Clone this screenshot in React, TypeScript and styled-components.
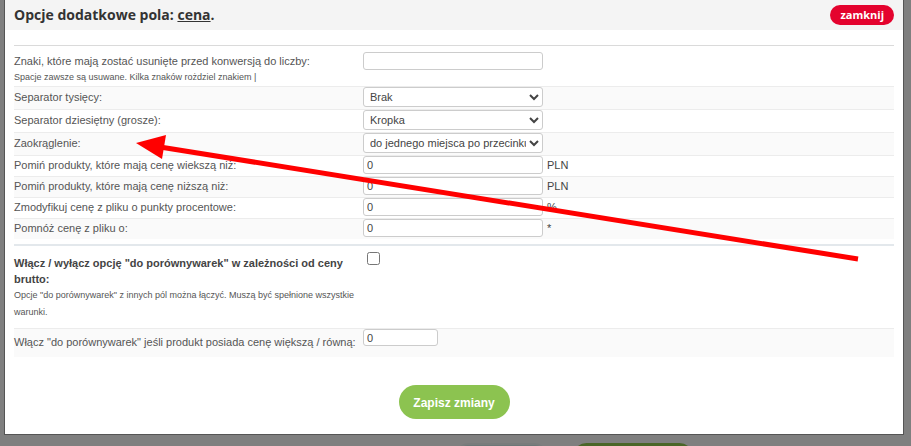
import React from "react";
import styled, { createGlobalStyle } from "styled-components";

const Global = createGlobalStyle`
  html, body { margin: 0; padding: 0; overflow: hidden; background: #fff; }
  * { box-sizing: border-box; }
`;

const Page = styled.div`
  height: 446px;
  overflow: hidden;
  padding-top: 443px;
`;

const PageFooter = styled.div`
  display: flex;
  gap: 25px;
  padding-left: 455px;
`;

const PagePill = styled.div<{ $w: number; $bg: string; $bd: string }>`
  width: ${(p) => p.$w}px;
  height: 27px;
  border-radius: 14px;
  background: ${(p) => p.$bg};
  border: 2px solid ${(p) => p.$bd};
`;

const Backdrop = styled.div`
  position: fixed;
  inset: 0;
  background: rgba(0, 0, 0, 0.5);
`;

const Dialog = styled.div`
  position: fixed;
  left: 4px;
  top: 0;
  width: 900px;
  background: #fff;
  border: 1px solid #555;
  border-top: none;
  padding-bottom: 15px;
`;

const Header = styled.div`
  height: 30px;
  background: #f4f4f4;
  display: flex;
  align-items: center;
  justify-content: space-between;
  padding: 0 9px;
`;

const Title = styled.h1`
  margin: 0;
  font: 700 14px/20px "Open Sans", sans-serif;
  color: #333;
  u { text-decoration: underline; }
`;

const CloseButton = styled.button`
  height: 20px;
  padding: 0 10px;
  border: none;
  border-radius: 10px;
  background: #e4032e;
  color: #fff;
  font: 700 11px/20px "Open Sans", sans-serif;
`;

const Body = styled.div`
  padding: 0 9px;
`;

const Rule = styled.div`
  margin-top: 15px;
  height: 1px;
  background: #dadada;
`;

const Row = styled.div<{ $shade?: boolean; $first?: boolean; $pt?: number; $pb?: number }>`
  display: grid;
  grid-template-columns: 349px 1fr;
  align-items: start;
  background: ${(p) => (p.$shade ? "#fafafa" : "#fff")};
  border-top: ${(p) => (p.$first ? "none" : "1px solid #ececec")};
  padding: ${(p) => p.$pt ?? 0}px 0 ${(p) => p.$pb ?? 2}px;
`;

const Label = styled.div<{ $lh: number; $pt?: number }>`
  font: 400 11px/${(p) => p.$lh}px "Liberation Sans", Arial, sans-serif;
  color: #555;
  padding-top: ${(p) => p.$pt ?? 0}px;
`;

const Hint = styled.div<{ $lh: number }>`
  font: 400 9px/${(p) => p.$lh}px "Liberation Sans", Arial, sans-serif;
  color: #555;
`;

const Strong = styled.div<{ $pt?: number }>`
  font: 700 11px/16px "Liberation Sans", Arial, sans-serif;
  color: #444;
  padding-top: ${(p) => p.$pt ?? 0}px;
`;

const Control = styled.div`
  display: flex;
  align-items: center;
  gap: 4px;
  font: 400 11px/18px "Liberation Sans", Arial, sans-serif;
  color: #444;
`;

const TextInput = styled.input<{ $w?: number; $h?: number }>`
  width: ${(p) => p.$w ?? 180}px;
  height: ${(p) => p.$h ?? 18}px;
  margin: 0;
  padding: 0 3px;
  border: 1px solid #ccc;
  border-radius: 3px;
  background: #fff;
  font: 400 11px "Liberation Sans", Arial, sans-serif;
  color: #444;
  outline: none;
`;

const Select = styled.select`
  width: 180px;
  height: 20px;
  margin: 0;
  padding: 0 0 0 2px;
  border: 1px solid #ccc;
  border-radius: 3px;
  background: #fff;
  font: 400 11px "Liberation Sans", Arial, sans-serif;
  color: #444;
`;

const Check = styled.input`
  width: 13px;
  height: 13px;
  margin: 0 0 0 4px;
`;

const SectionRule = styled.div`
  margin-top: 5px;
  height: 2px;
  background: #e3e8ec;
`;

const Footer = styled.div`
  display: flex;
  justify-content: center;
  margin-top: 28px;
`;

const SaveButton = styled.button`
  width: 111px;
  height: 34px;
  border: none;
  border-radius: 17px;
  background: #8cc350;
  color: #fff;
  font: 700 12px/34px "Liberation Sans", Arial, sans-serif;
`;

const Annotation = styled.svg`
  position: fixed;
  left: 0;
  top: 0;
  pointer-events: none;
`;

type Field =
  | { kind: "select"; label: string; value: string }
  | { kind: "input"; label: string; unit: string };

const fields: Field[] = [
  { kind: "select", label: "Separator tysięcy:", value: "Brak" },
  { kind: "select", label: "Separator dziesiętny (grosze):", value: "Kropka" },
  { kind: "select", label: "Zaokrąglenie:", value: "do jednego miejsca po przecinku" },
  { kind: "input", label: "Pomiń produkty, które mają cenę wiekszą niż:", unit: "PLN" },
  { kind: "input", label: "Pomiń produkty, które mają cenę niższą niż:", unit: "PLN" },
  { kind: "input", label: "Zmodyfikuj cenę z pliku o punkty procentowe:", unit: "%" },
  { kind: "input", label: "Pomnóż cenę z pliku o:", unit: "*" },
];

export default function App() {
  return (
    <>
      <Global />
      <Page>
        <PageFooter>
          <PagePill $w={93} $bg="#dbeeee" $bd="#f2f8f8" />
          <PagePill $w={120} $bg="#94cc50" $bd="#94cc50" />
        </PageFooter>
      </Page>
      <Backdrop />
      <Dialog>
        <Header>
          <Title>
            Opcje dodatkowe pola: <u>cena</u>.
          </Title>
          <CloseButton>zamknij</CloseButton>
        </Header>
        <Body>
          <Rule />
          <Row $first $pt={6}>
            <div>
              <Label $lh={18}>Znaki, które mają zostać usunięte przed konwersją do liczby:</Label>
              <Hint $lh={14}>Spacje zawsze są usuwane. Kilka znaków rożdziel znakiem |</Hint>
            </div>
            <Control>
              <TextInput defaultValue="" />
            </Control>
          </Row>
          {fields.map((f, i) => (
            <Row key={f.label} $shade={i % 2 === 0}>
              <Label $lh={f.kind === "select" ? 20 : 18}>{f.label}</Label>
              <Control>
                {f.kind === "select" ? (
                  <Select defaultValue={f.value}>
                    <option>{f.value}</option>
                  </Select>
                ) : (
                  <>
                    <TextInput defaultValue="0" />
                    <span>{f.unit}</span>
                  </>
                )}
              </Control>
            </Row>
          ))}
          <SectionRule />
          <Row $first $pt={6} $pb={7}>
            <div>
              <Strong $pt={3}>
                Włącz / wyłącz opcję "do porównywarek" w zależności od ceny brutto:
              </Strong>
              <Hint $lh={17}>
                Opcje "do porównywarek" z innych pól można łączyć. Muszą być spełnione wszystkie warunki.
              </Hint>
            </div>
            <Control>
              <Check type="checkbox" />
            </Control>
          </Row>
          <Row $shade $pb={7}>
            <Label $lh={16} $pt={5}>
              Włącz "do porównywarek" jeśli produkt posiada cenę większą / równą:
            </Label>
            <Control>
              <TextInput defaultValue="0" $w={75} $h={17} />
            </Control>
          </Row>
          <Footer>
            <SaveButton>Zapisz zmiany</SaveButton>
          </Footer>
        </Body>
      </Dialog>
      <Annotation width="911" height="446" viewBox="0 0 911 446">
        <line x1="858" y1="259" x2="160" y2="147" stroke="#ff0000" strokeWidth="5" />
        <polygon points="136,143 166,135 162,159" fill="#ff0000" />
      </Annotation>
    </>
  );
}
